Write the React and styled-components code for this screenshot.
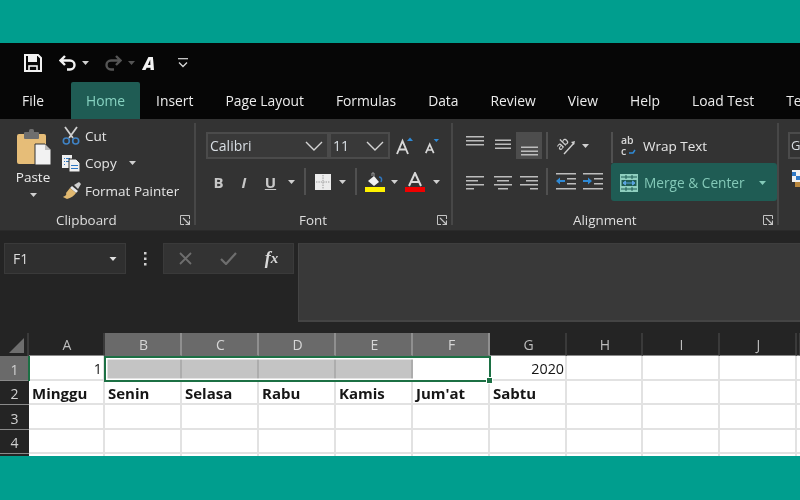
import React from "react";
import styled, { createGlobalStyle } from "styled-components";

const Global = createGlobalStyle`
  html, body { margin: 0; padding: 0; background: #009e8e; }
  * { box-sizing: border-box; }
`;

const Page = styled.div`
  width: 800px; height: 500px; background: #009e8e; padding: 43px 0 44px; overflow: hidden;
  font-family: "Open Sans", "Liberation Sans", sans-serif;
`;
const Win = styled.div`
  height: 413px; background: #242424; overflow: hidden; display: flex; flex-direction: column;
  filter: blur(0.5px);
`;
const Qat = styled.div`
  height: 39px; background: #060606; display: flex; align-items: center; padding-left: 24px; flex: none;
`;
const QatCell = styled.div`
  width: ${p => p.$w}px; display: flex; justify-content: center; align-items: center; flex: none;
`;
const QatA = styled.span`
  font: italic 800 18px "Open Sans", sans-serif; color: #f4f4f4; line-height: 1;
`;
const TabBar = styled.div`
  height: 37px; background: #060606; display: flex; flex: none; overflow: hidden; padding-left: 6px;
`;
const Tab = styled.div`
  padding: 0 ${p => (p.$active ? 15 : 16)}px; margin-left: ${p => (p.$active ? 11 : 0)}px;
  display: flex; align-items: center; flex: none; font-size: 13.85px;
  color: ${p => (p.$active ? "#86d2c0" : "#ececec")};
  background: ${p => (p.$active ? "#1f5c54" : "transparent")};
  border-radius: 2px 2px 0 0;
`;
const Ribbon = styled.div`
  height: 111px; background: #333333; display: flex; padding: 4px 0 5px; flex: none;
`;
const Group = styled.div`
  width: ${p => p.$w}px; flex: none; display: flex; flex-direction: column;
  border-right: ${p => (p.$end ? "2px solid #474747" : "none")};
`;
const GroupBody = styled.div`
  flex: 1; display: flex; padding-left: ${p => p.$pl || 0}px; padding-top: ${p => p.$pt || 0}px; min-height: 0;
`;
const GroupFoot = styled.div`
  height: 20px; margin-bottom: -5px; display: flex; align-items: center; justify-content: space-between;
  padding: 0 4px 0 ${p => p.$pl}px; flex: none;
`;
const GroupLabel = styled.span`
  font-size: 13.4px; color: #dedede;
`;
const PasteCol = styled.div`
  width: 36px; margin-right: 8px; display: flex; flex-direction: column; align-items: center; padding-top: 1px; flex: none;
`;
const PasteLabel = styled.span`
  font-size: 13.5px; color: #ececec; margin-top: 3px; line-height: 18px; margin-left: -2px;
`;
const CaretWrap = styled.div`
  margin-top: 7px; display: flex; margin-left: -2px;
`;
const ClipCol = styled.div`
  display: flex; flex-direction: column; flex: none; margin-top: -6px;
`;
const ClipRow = styled.div`
  height: 27.5px; display: flex; align-items: center; gap: 3px; font-size: 13.5px; color: #e4e4e4;
`;
const ClipIcon = styled.div`
  width: 22px; display: flex; justify-content: center; flex: none;
`;
const CopyCaret = styled.span`
  display: flex; margin-left: 9px;
`;
const Stack = styled.div`
  display: flex; flex-direction: column; gap: 9px;
`;
const Row = styled.div`
  height: 27px; display: flex; align-items: center;
`;
const Cell = styled.div`
  width: ${p => p.$w}px; height: 27px; flex: none; display: flex; align-items: center; justify-content: center;
  background: ${p => (p.$on ? "#4d4d4d" : "transparent")};
`;
const VSep = styled.div`
  width: 2px; height: 27px; background: #505050;
`;
const Combo = styled.div`
  width: ${p => p.$w}px; height: 27px; flex: none; display: flex; align-items: center; justify-content: space-between;
  border: 2px solid #4b4b4b; background: #393939; padding: 0 4px 0 2px;
  font-size: 14px; color: #d8dee4;
`;
const BoldGlyph = styled.span`
  font-size: 15px; font-weight: 700; font-style: ${p => (p.$i ? "italic" : "normal")}; color: #c8c8c8;
  text-decoration: ${p => (p.$u ? "underline" : "none")};
  font-family: "Open Sans", sans-serif;
`;
const RightCol = styled.div`
  width: 166px; display: flex; flex-direction: column; flex: none;
`;
const WrapRow = styled.div`
  height: 31px; display: flex; align-items: center; gap: 6px; padding: 0 0 3px 8px; border-left: 2px solid #505050;
  font-size: 13.5px; color: #e6e6e6;
`;
const MergeBtn = styled.div`
  height: 38px; display: flex; align-items: center; gap: 6px; padding: 1px 0 0 9px; background: #1f5c54; border-radius: 3px;
  font-size: 13.7px; color: #84c9b8;
`;
const MergeCaret = styled.div`
  margin-left: 8px; display: flex;
`;
const NextBox = styled.div`
  width: 30px; height: 27px; margin-left: 9px; border: 2px solid #4b4b4b; font-size: 13px; color: #d8dee4; padding-left: 1px;
  line-height: 23px; overflow: hidden;
`;
const NextStack = styled.div`
  display: flex; flex-direction: column; gap: 11px;
`;
const NextIcon = styled.div`
  margin-left: 13px; display: flex;
`;

const FormulaArea = styled.div`
  height: 103px; background: #242424; display: flex; align-items: flex-start; padding: 12px 0 0 4px; flex: none; border-top: 1px solid #2a2a2a;
`;
const NameBox = styled.div`
  width: 122px; height: 31px; background: #2f2f2f; border: 1px solid #3a3a3a; display: flex; align-items: center; justify-content: space-between;
  padding: 0 7px 0 8px; font-size: 14px; color: #dcdcdc; flex: none;
`;
const Dots = styled.div`
  width: 37px; height: 31px; display: flex; justify-content: center; align-items: center; flex: none;
`;
const FxBox = styled.div`
  width: 131px; height: 31px; background: #333333; border: 1px solid #3a3a3a; display: flex; align-items: center; flex: none;
`;
const FxCell = styled.div`
  width: 44px; display: flex; justify-content: center; align-items: center; font: italic 700 18px "Liberation Serif", serif; color: #d8d8d8;
`;
const FormulaInput = styled.div`
  flex: 1; height: 79px; margin-left: 4px; background: #393939; border-top: 1px solid #3e3e3e; border-bottom: 2px solid #444; border-left: 1px solid #444;
`;

const Sheet = styled.div`
  position: relative; display: grid; flex: none;
  grid-template-columns: 29px 76px 77px 77px 77px 77px 77px 77px 76px 77px 77px 3px;
  grid-template-rows: 23px 25px 24px 25px 24px 2px;
  background: #fff;
`;
const ColHead = styled.div`
  background: ${p => (p.$sel ? "#6a6a6a" : "#242424")};
  border-right: 2px solid ${p => (p.$sel ? "#8f8f8f" : "#3a3a3a")};
  border-bottom: 1px solid ${p => (p.$sel ? "#6a6a6a" : "#8a8a8a")};
  display: flex; align-items: center; justify-content: center; font-size: 14px; padding-left: 2px;
  color: ${p => (p.$sel ? "#d6d6d6" : "#bdbdbd")};
`;
const Corner = styled.div`
  background: #242424; display: flex; align-items: flex-end; justify-content: flex-end; padding: 0 3px 3px 0;
  border-right: 2px solid #3a3a3a;
`;
const RowHead = styled.div`
  background: ${p => (p.$sel ? "#6a6a6a" : "#242424")};
  border-bottom: 1px solid #8a8a8a; padding-top: 2px;
  display: flex; align-items: center; justify-content: center; font-size: 14px; color: #d0d0d0;
`;
const GridCell = styled.div`
  background: ${p => p.$bg || "#fff"};
  border-right: 2px solid ${p => (p.$bg ? "#adadad" : "#e2e2e2")};
  border-bottom: 2px solid #e2e2e2;
  display: flex; align-items: center; justify-content: ${p => (p.$right ? "flex-end" : "flex-start")};
  padding: 2px ${p => (p.$right ? 1 : 0)}px 0 ${p => (p.$right ? 0 : 3)}px;
  font-family: "Open Sans", sans-serif; font-size: ${p => (p.$bold ? 15 : 14.3)}px; font-weight: ${p => (p.$bold ? 700 : 400)};
  color: #161616; white-space: nowrap; overflow: hidden;
`;
const Selection = styled.div`
  position: absolute; left: 104px; top: 23px; width: 387px; height: 26px; border: 2px solid #1c7044; pointer-events: none;
  box-shadow: inset 0 0 0 1.5px #fff;
`;
const Handle = styled.div`
  position: absolute; right: -4px; bottom: -4px; width: 7px; height: 7px; background: #1c7044; border: 1px solid #fff;
`;
const ActiveEdge = styled.div`
  position: absolute; left: 28px; top: 23px; width: 2px; height: 25px; background: #1c7044;
`;

const Caret = ({ c = "#d0d0d0", w = 7 }) => (
  <svg width={w} height="4" viewBox="0 0 7 4"><path d="M0 0h7L3.5 4z" fill={c} /></svg>
);
const Chevron = () => (
  <svg width="18" height="10" viewBox="0 0 18 10"><path d="M1 1l8 8 8-8" fill="none" stroke="#d4d4d4" strokeWidth="1.4" /></svg>
);
const Launcher = () => (
  <svg width="10" height="10" viewBox="0 0 10 10" fill="none" stroke="#c4c4c4"><path d="M9.5 4V.5H.5v9H4" /><path d="M3 3l6 6M9.5 5.5v4h-4" strokeWidth="1.2" /></svg>
);
const Save = () => (
  <svg width="18" height="18" viewBox="0 0 18 18"><path d="M1 1h13l3 3v13H1z" fill="none" stroke="#f2f2f2" strokeWidth="2" /><rect x="4" y="2" width="9" height="6" fill="#f2f2f2" /><rect x="5" y="12" width="8" height="5" fill="none" stroke="#f2f2f2" strokeWidth="1.6" /></svg>
);
const Undo = ({ c = "#f2f2f2", flip }) => (
  <svg width="18" height="16" viewBox="0 0 18 16" style={flip ? { transform: "scaleX(-1)" } : undefined}><path d="M6 1L1.5 5.5 6 10M2 5.5h9a4.5 4.5 0 0 1 0 9H8" fill="none" stroke={c} strokeWidth="2.4" /></svg>
);
const QatMenu = () => (
  <svg width="10" height="10" viewBox="0 0 10 10"><path d="M0 .7h10" stroke="#d8d8d8" strokeWidth="1.2" /><path d="M1 4.5l4 4 4-4" fill="none" stroke="#d8d8d8" strokeWidth="1.3" /></svg>
);
const Paste = () => (
  <svg width="34" height="36" viewBox="0 0 34 36">
    <rect x="0" y="5" width="29" height="30" rx="2" fill="#e6bd78" />
    <rect x="7" y="3" width="15" height="7" rx="1" fill="#6e6e6e" /><rect x="12" y="0" width="5" height="5" rx="1.5" fill="#6e6e6e" />
    <path d="M18 15h10l6 6v15H18z" fill="#f2f2f2" stroke="#333" /><path d="M28 15v6h6" fill="#bbb" />
  </svg>
);
const Scissors = () => (
  <svg width="18" height="19" viewBox="0 0 18 19" fill="none">
    <path d="M3 1l8 11M15 1L7 12" stroke="#cfcfcf" strokeWidth="1.8" />
    <circle cx="4.3" cy="15" r="3" stroke="#3f83c6" strokeWidth="1.6" /><circle cx="13.7" cy="15" r="3" stroke="#3f83c6" strokeWidth="1.6" />
  </svg>
);
const CopyIco = () => (
  <svg width="18" height="17" viewBox="0 0 18 17">
    <rect x="0" y="0" width="10" height="13" fill="#f0f0f0" /><path d="M2 3h1v1H2zM2 6h1v1H2zM2 9h1v1H2z" fill="#2f78c4" /><path d="M4 3h4v1H4zM4 6h4v1H4z" fill="#2f78c4" />
    <path d="M7 4h7l4 4v9H7z" fill="#f0f0f0" stroke="#333" /><path d="M9 10h7v1H9zM9 13h7v1H9z" fill="#2f78c4" />
  </svg>
);
const Brush = () => (
  <svg width="19" height="17" viewBox="0 0 19 17">
    <path d="M12 3l5-3 2 2-3 5z" fill="#cfcfcf" /><path d="M10 4l6 5-2 2-6-5z" fill="#eaeaea" />
    <path d="M8 6l6 5c-2 3-5 5-9 6L1 15c2-1 4-2 3-4z" fill="#e0b870" />
  </svg>
);
const GrowA = ({ big, up }) => (
  <svg width={big ? 17 : 15} height="18" viewBox="0 0 17 18">
    <path d={big ? "M1 17L6.5 4l5.500 13M3 12.500h7" : "M2 17L6.500 7 11 17M3.800 13.500h5.500"} fill="none" stroke="#d8d8d8" strokeWidth="1.9" />
    <path d={up ? "M11 4l3-3.500L17 4z" : "M11 1l3 3.500L17 1z"} fill="#2f8ad6" />
  </svg>
);
const Borders = () => (
  <svg width="16" height="16" viewBox="0 0 16 16"><rect width="16" height="16" fill="#ececec" /><path d="M8 1v14M1 8h14" stroke="#9a9a9a" strokeDasharray="1.4 1" /></svg>
);
const Fill = () => (
  <svg width="20" height="20" viewBox="0 0 20 20">
    <path d="M3 9l6-5 5 6-5 4z" fill="#f0f0f0" /><path d="M7 4V1h2v3" fill="none" stroke="#9a9a9a" /><path d="M14 5c3 0 3 3 2 5" fill="none" stroke="#2f78c4" strokeWidth="1.5" />
    <rect y="15" width="20" height="5" fill="#fff200" />
  </svg>
);
const FontColor = () => (
  <svg width="20" height="20" viewBox="0 0 20 20">
    <path d="M4 14L10 1l6 13M6 10h8" fill="none" stroke="#d8d8d8" strokeWidth="2" /><rect y="15" width="20" height="5" fill="#f00000" />
  </svg>
);
const Lines = ({ rows, w = 18 }) => (
  <svg width={w} height="20" viewBox={`0 0 ${w} 20`}>{rows.map(([x, y, l], i) => <rect key={i} x={x} y={y} width={l} height="1.5" fill="#bdbdbd" />)}</svg>
);
const top = [[0, 0, 18], [0, 4, 18], [0, 8, 18]];
const mid = [[1, 3.5, 16], [1, 7.5, 16], [1, 11.5, 16]];
const bot = [[1, 10.5, 17], [1, 14.5, 17], [1, 18, 17]];
const left = [[0, 4, 18], [0, 8, 12], [0, 12, 18], [0, 16, 8]];
const center = [[0, 4, 18], [3, 8, 12], [0, 12, 18], [4, 16, 10]];
const right = [[0, 4, 18], [6, 8, 12], [0, 12, 18], [10, 16, 8]];
const Orient = () => (
  <svg width="20" height="20" viewBox="0 0 20 20" fill="none" overflow="visible">
    <text x="1" y="13" transform="rotate(-45 5 10)" fontFamily="Open Sans" fontSize="11" fontWeight="600" fill="#cfcfcf">ab</text>
    <path d="M8 18L18 7" stroke="#cfcfcf" strokeWidth="1.4" /><path d="M19 5l-4 1 3 3z" fill="#cfcfcf" />
  </svg>
);
const Indent = ({ rev }) => (
  <svg width="20" height="17" viewBox="0 0 20 17">
    <rect width="20" height="1.5" fill="#bdbdbd" /><rect y="15" width="20" height="1.5" fill="#bdbdbd" />
    <rect x="11" y="5" width="9" height="1.5" fill="#bdbdbd" /><rect x="11" y="10" width="9" height="1.5" fill="#bdbdbd" />
    <path d={rev ? "M0 8l4-3.500v2.500h5v2H4v2.500z" : "M9 8L5 4.500v2.500H0v2h5v2.500z"} fill="#2f8ad6" />
  </svg>
);
const WrapIco = () => (
  <svg width="16" height="20" viewBox="0 0 16 20" fill="none" overflow="visible">
    <text x="0" y="8" fontFamily="Open Sans" fontSize="10.5" fontWeight="600" fill="#d6d6d6">ab</text>
    <text x="0" y="19" fontFamily="Open Sans" fontSize="10.5" fontWeight="600" fill="#d6d6d6">c</text>
    <path d="M8 17h4l2-3" stroke="#2f8ad6" strokeWidth="1.500" />
  </svg>
);
const MergeIco = () => (
  <svg width="18" height="18" viewBox="0 0 18 18">
    <rect width="18" height="18" fill="#8fcfbf" /><rect x="1.500" y="6" width="15" height="6" fill="#1f5c54" />
    <path d="M5 9h8M3 9l2.500-2v4zM15 9l-2.500-2v4z" stroke="#5ba4e0" fill="#5ba4e0" /><path d="M1 3h16M1 15h16M6 1v4M12 1v4M6 13v4M12 13v4" stroke="#1f5c54" />
  </svg>
);
const DotsIco = () => (
  <svg width="4" height="14" viewBox="0 0 4 14" fill="#d0d0d0"><rect x="1" y="0" width="2.500" height="2.500" /><rect x="1" y="5.500" width="2.500" height="2.500" /><rect x="1" y="11" width="2.500" height="2.500" /></svg>
);
const Cross = () => (
  <svg width="13" height="13" viewBox="0 0 13 13"><path d="M1 1l11 11M12 1L1 12" stroke="#6e6e6e" strokeWidth="1.800" /></svg>
);
const Check = () => (
  <svg width="17" height="13" viewBox="0 0 17 13"><path d="M1 7l5 5L16 1" fill="none" stroke="#6e6e6e" strokeWidth="2.200" /></svg>
);
const CornerTri = () => (
  <svg width="15" height="15" viewBox="0 0 15 15"><path d="M15 0v15H0z" fill="#6e6e6e" /></svg>
);
const NextPic = () => (
  <svg width="10" height="17" viewBox="0 0 10 17"><rect width="10" height="12" fill="#f0f0f0" /><rect x="0" y="2" width="4" height="4" fill="#2f78c4" /><rect x="4" y="6" width="4" height="4" fill="#2f78c4" /><rect x="3" y="12" width="6" height="5" fill="#b8863c" /></svg>
);

const columns = ["B", "C", "D", "E", "F"];
const tabs = ["File", "Home", "Insert", "Page Layout", "Formulas", "Data", "Review", "View", "Help", "Load Test", "Team"];
const allCols = ["A", "B", "C", "D", "E", "F", "G", "H", "I", "J"];
const row2 = ["Minggu", "Senin", "Selasa", "Rabu", "Kamis", "Jum'at", "Sabtu", "", "", "", ""];
const blanks = Array.from({ length: 11 });

export default function App() {
  return (
    <Page>
      <Global />
      <Win>
        <Qat>
          <QatCell $w={18}><Save /></QatCell>
          <QatCell $w={16} />
          <QatCell $w={20}><Undo /></QatCell>
          <QatCell $w={14}><Caret /></QatCell>
          <QatCell $w={12} />
          <QatCell $w={18}><Undo c="#555" flip /></QatCell>
          <QatCell $w={18}><Caret c="#555" /></QatCell>
          <QatCell $w={18}><QatA>A</QatA></QatCell>
          <QatCell $w={18} />
          <QatCell $w={14}><QatMenu /></QatCell>
        </Qat>
        <TabBar>
          {tabs.map(t => <Tab key={t} $active={t === "Home"}>{t}</Tab>)}
        </TabBar>
        <Ribbon>
          <Group $w={196} $end>
            <GroupBody $pl={16} $pt={5}>
              <PasteCol>
                <Paste />
                <PasteLabel>Paste</PasteLabel>
                <CaretWrap><Caret /></CaretWrap>
              </PasteCol>
              <ClipCol>
                <ClipRow><ClipIcon><Scissors /></ClipIcon>Cut</ClipRow>
                <ClipRow><ClipIcon><CopyIco /></ClipIcon>Copy<CopyCaret><Caret /></CopyCaret></ClipRow>
                <ClipRow><ClipIcon><Brush /></ClipIcon>Format Painter</ClipRow>
              </ClipCol>
            </GroupBody>
            <GroupFoot $pl={56}><GroupLabel>Clipboard</GroupLabel><Launcher /></GroupFoot>
          </Group>
          <Group $w={257} $end>
            <GroupBody $pl={10} $pt={9}>
              <Stack>
                <Row>
                  <Combo $w={123}>Calibri<Chevron /></Combo>
                  <Combo $w={61}>11<Chevron /></Combo>
                  <Cell $w={29}><GrowA big up /></Cell>
                  <Cell $w={25}><GrowA /></Cell>
                </Row>
                <Row>
                  <Cell $w={25}><BoldGlyph>B</BoldGlyph></Cell>
                  <Cell $w={26}><BoldGlyph $i>I</BoldGlyph></Cell>
                  <Cell $w={27}><BoldGlyph $u>U</BoldGlyph></Cell>
                  <Cell $w={14}><Caret /></Cell>
                  <Cell $w={14}><VSep /></Cell>
                  <Cell $w={22}><Borders /></Cell>
                  <Cell $w={16}><Caret /></Cell>
                  <Cell $w={12}><VSep /></Cell>
                  <Cell $w={26}><Fill /></Cell>
                  <Cell $w={12}><Caret /></Cell>
                  <Cell $w={30}><FontColor /></Cell>
                  <Cell $w={12}><Caret /></Cell>
                </Row>
              </Stack>
            </GroupBody>
            <GroupFoot $pl={103}><GroupLabel>Font</GroupLabel><Launcher /></GroupFoot>
          </Group>
          <Group $w={326} $end>
            <GroupBody $pl={7} $pt={9}>
              <Stack>
                <Row>
                  <Cell $w={30}><Lines rows={top} /></Cell>
                  <Cell $w={26}><Lines rows={mid} /></Cell>
                  <Cell $w={26} $on><Lines rows={bot} /></Cell>
                  <Cell $w={10}><VSep /></Cell>
                  <Cell $w={28}><Orient /></Cell>
                  <Cell $w={10}><Caret /></Cell>
                  <Cell $w={21} />
                </Row>
                <Row>
                  <Cell $w={30}><Lines rows={left} /></Cell>
                  <Cell $w={26}><Lines rows={center} /></Cell>
                  <Cell $w={26}><Lines rows={right} /></Cell>
                  <Cell $w={10}><VSep /></Cell>
                  <Cell $w={28}><Indent rev /></Cell>
                  <Cell $w={26}><Indent /></Cell>
                  <Cell $w={5} />
                </Row>
              </Stack>
              <RightCol>
                <WrapRow><WrapIco />Wrap Text</WrapRow>
                <MergeBtn><MergeIco />Merge &amp; Center<MergeCaret><Caret c="#84c9b8" /></MergeCaret></MergeBtn>
              </RightCol>
            </GroupBody>
            <GroupFoot $pl={120}><GroupLabel>Alignment</GroupLabel><Launcher /></GroupFoot>
          </Group>
          <Group $w={21}>
            <GroupBody $pt={9}>
              <NextStack>
                <NextBox>G</NextBox>
                <NextIcon><NextPic /></NextIcon>
              </NextStack>
            </GroupBody>
          </Group>
        </Ribbon>
        <FormulaArea>
          <NameBox>F1<Caret c="#e0e0e0" w={10} /></NameBox>
          <Dots><DotsIco /></Dots>
          <FxBox>
            <FxCell><Cross /></FxCell>
            <FxCell><Check /></FxCell>
            <FxCell>f<small>x</small></FxCell>
          </FxBox>
          <FormulaInput />
        </FormulaArea>
        <Sheet>
          <Corner><CornerTri /></Corner>
          {allCols.map(c => <ColHead key={c} $sel={columns.includes(c)}>{c}</ColHead>)}
          <ColHead />
          <RowHead $sel>1</RowHead>
          <GridCell $right>1</GridCell>
          <GridCell $bg="#c4c4c4" />
          <GridCell $bg="#c4c4c4" />
          <GridCell $bg="#c4c4c4" />
          <GridCell $bg="#c4c4c4" />
          <GridCell />
          <GridCell $right>2020</GridCell>
          <GridCell /><GridCell /><GridCell /><GridCell />
          <RowHead>2</RowHead>
          {row2.map((t, i) => <GridCell key={i} $bold>{t}</GridCell>)}
          <RowHead>3</RowHead>
          {blanks.map((_, i) => <GridCell key={i} />)}
          <RowHead>4</RowHead>
          {blanks.map((_, i) => <GridCell key={i} />)}
          <RowHead />
          {blanks.map((_, i) => <GridCell key={i} />)}
          <ActiveEdge />
          <Selection><Handle /></Selection>
        </Sheet>
      </Win>
    </Page>
  );
}
